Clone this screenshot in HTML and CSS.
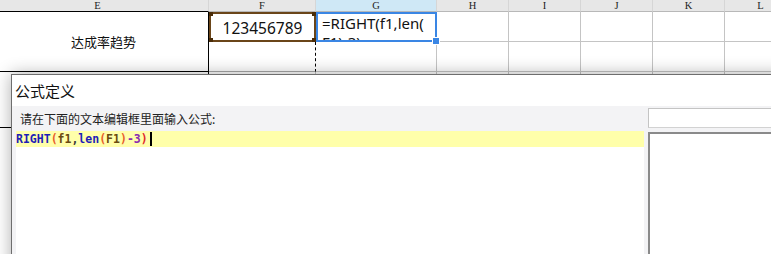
FILE: index.html
```html
<!DOCTYPE html>
<html lang="zh-CN">
<head>
  <meta charset="UTF-8" />
  <title>公式定义</title>
  <link rel="stylesheet" href="styles.css">
</head>
<body>
  <div class="sheet">
    <div class="head">E</div>
    <div class="head">F</div>
    <div class="head head-on">G</div>
    <div class="head">H</div>
    <div class="head">I</div>
    <div class="head">J</div>
    <div class="head">K</div>
    <div class="head">L</div>

    <div class="cell merged">达成率趋势</div>
    <div class="cell pick">123456789
      <span class="dot tl"></span><span class="dot tr"></span>
      <span class="dot bl"></span><span class="dot br"></span>
    </div>
    <div class="cell active">
      <div class="active-text">=RIGHT(f1,len(<wbr>F1)-3)</div>
      <span class="handle"></span>
    </div>
    <div class="cell"></div><div class="cell"></div><div class="cell"></div><div class="cell"></div><div class="cell"></div>

    <div class="cell under-pick"></div>
    <div class="cell"></div>
    <div class="cell"></div><div class="cell"></div><div class="cell"></div><div class="cell"></div><div class="cell"></div>

    <div class="cell tall"></div>
    <div class="cell"></div><div class="cell"></div><div class="cell"></div><div class="cell"></div><div class="cell"></div><div class="cell"></div><div class="cell"></div>
  </div>

  <div class="dialog">
    <div class="dialog-title">公式定义</div>
    <div class="dialog-body">
      <div class="editor-pane">
        <div class="hint">请在下面的文本编辑框里面输入公式:</div>
        <div class="editor">
          <div class="line current"><span class="fn">RIGHT</span><span class="par">(</span><span class="ref">f1</span><span class="sep">,</span><span class="fn">len</span><span class="par">(</span><span class="ref">F1</span><span class="par">)</span><span class="num">-3</span><span class="par2">)</span><span class="caret"></span></div>
        </div>
      </div>
      <div class="side-pane">
        <div class="side-input"></div>
        <div class="side-box"></div>
      </div>
    </div>
  </div>
</body>
</html>
```

FILE: styles.css
```css
body {
  margin: 0;
  width: 771px;
  height: 254px;
  overflow: hidden;
  position: relative;
  background: #fff;
  font-family: "Noto Sans", "Noto Sans CJK SC", sans-serif;
  color: #111;
}

/* Spreadsheet behind the dialog */
.sheet {
  display: grid;
  grid-template-columns: 222px 107px 121px 72px 72px 72px 72px 72px;
  grid-template-rows: 12px 30px 30px 56px 20px 19px 19px 19px 19px 19px 19px;
  grid-auto-rows: 19px;
  margin-left: -13px;
  width: 810px;
}

.head {
  box-sizing: border-box;
  background: #e7e7e7;
  border-right: 1px solid #d6d6d6;
  border-bottom: 1px solid #b8b8b8;
  font-family: "Liberation Serif", serif;
  font-size: 10.5px;
  line-height: 11px;
  text-align: center;
  color: #222;
}

.head:first-child {
  border-bottom-color: #000;
}

.head-on {
  background: #cfe8f6;
}

.cell {
  box-sizing: border-box;
  border-right: 1px solid #c4c4c4;
  border-bottom: 1px solid #c4c4c4;
  position: relative;
}

.merged {
  grid-row: span 2;
  border-right-color: #000;
  border-bottom-color: #000;
  display: flex;
  align-items: center;
  justify-content: center;
  font-family: "Noto Sans CJK SC", sans-serif;
  font-size: 13px;
  padding-left: 12px;
}

.tall {
  border-bottom-color: #000;
  border-right-color: #000;
}

.pick {
  border: 2px solid #6a4519;
  font-size: 15.5px;
  display: flex;
  align-items: center;
  justify-content: center;
  padding-top: 2px;
}

.dot {
  position: absolute;
  width: 4px;
  height: 4px;
  background: #4a2c08;
}

.tl { left: -2px; top: -2px; }
.tr { right: -2px; top: -2px; }
.bl { left: -2px; bottom: -2px; }
.br { right: -2px; bottom: -2px; }

.active {
  border: 2px solid #3a86e4;
  z-index: 2;
}

.active-text {
  height: 100%;
  overflow: hidden;
  font-size: 15px;
  line-height: 19px;
  padding: 0 4px 0 4px;
}

.handle {
  position: absolute;
  right: -5px;
  bottom: -5px;
  width: 6px;
  height: 6px;
  background: #3a86e4;
  border: 1px solid #fff;
}

.under-pick {
  border-right: 1px dashed #000;
  border-bottom-color: #a8a8a8;
}

/* Formula dialog */
.dialog {
  position: absolute;
  left: 11px;
  top: 74px;
  width: 820px;
  height: 220px;
  border: 1px solid #6e6e6e;
  background: #fff;
  box-shadow: 0 0 16px rgba(0, 0, 0, 0.32);
  display: flex;
  flex-direction: column;
}

.dialog-title {
  height: 31px;
  line-height: 31px;
  padding-left: 3px;
  font-family: "Noto Sans CJK SC", sans-serif;
  font-size: 15px;
  color: #111;
}

.dialog-body {
  flex: 1;
  display: flex;
  background: #f3f3f5;
}

.editor-pane {
  width: 632px;
  display: flex;
  flex-direction: column;
}

.hint {
  height: 24px;
  line-height: 24px;
  padding: 1px 0 0 8px;
  font-family: "Noto Sans CJK SC", sans-serif;
  font-size: 12px;
  color: #222;
}

.editor {
  flex: 1;
  margin-left: 4px;
  background: #fff;
}

.line {
  height: 16px;
  line-height: 16px;
  font-family: "DejaVu Sans Mono", monospace;
  font-weight: bold;
  font-size: 11.5px;
  white-space: pre;
  display: flex;
  align-items: center;
}

.current {
  background: #ffffaa;
}

.fn { color: #1d1db8; }
.par { color: #e8602c; }
.par2 { color: #e0282c; }
.ref { color: #6a4a10; }
.sep { color: #3a3a3a; }
.num { color: #8a2cb0; }

.caret {
  width: 2px;
  height: 14px;
  margin-left: 2px;
  background: #000;
}

.side-pane {
  flex: 1;
  padding-left: 4px;
  display: flex;
  flex-direction: column;
}

.side-input {
  margin-top: 2px;
  height: 20px;
  box-sizing: border-box;
  background: #fff;
  border: 1px solid #d2d2d2;
  border-top-color: #c4c4c4;
  border-left-color: #c4c4c4;
}

.side-box {
  margin-top: 4px;
  flex: 1;
  background: #fff;
  border: 1px solid #9a9a9a;
  border-top: 2px solid #8a8a8a;
  border-left: 2px solid #8a8a8a;
}
```
